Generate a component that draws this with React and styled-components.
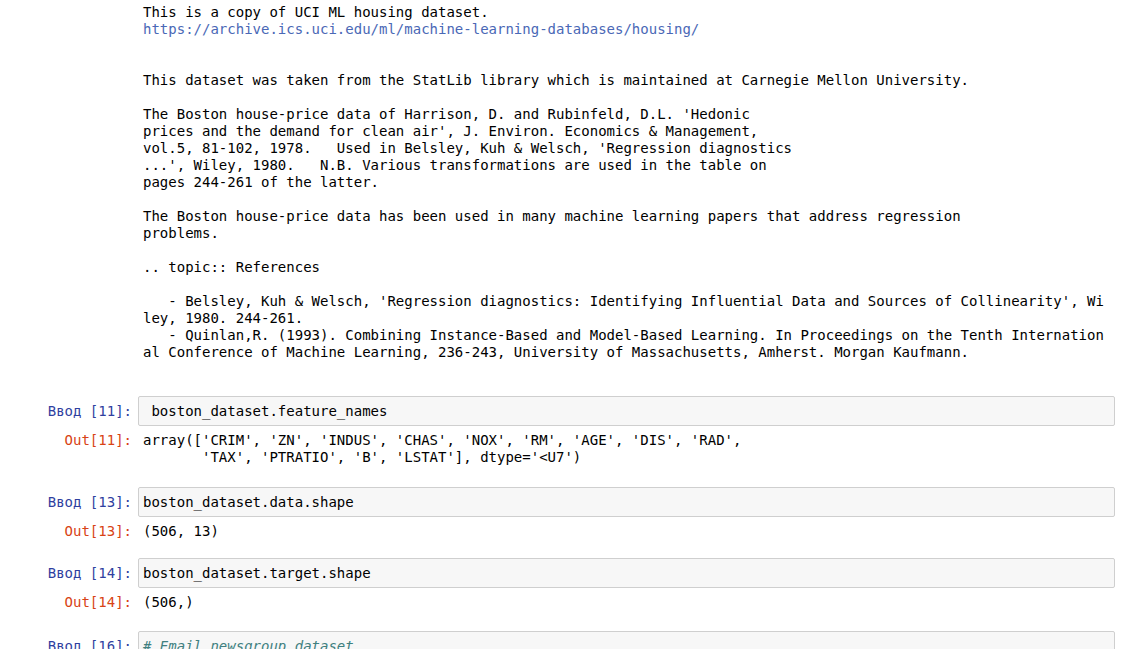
import React from 'react'
import styled, { createGlobalStyle } from 'styled-components';

const GlobalStyle = createGlobalStyle`
    body {
        margin: 0;
        background: #ffffff;
        color: #000000;
        font-family: 'DejaVu Sans Mono', 'Liberation Mono', monospace;
        font-size: 14px;
    }
`

const Notebook = styled.div`
    width: 1115px;
    padding-top: 4px;
    display: flex;
    flex-direction: column;
`

const Cell = styled.div`
    display: flex;
    flex-direction: column;
    padding: 6px 0;
`

const Row = styled.div`
    display: grid;
    grid-template-columns: 138px 1fr;
`

const Prompt = styled.div`
    text-align: right;
    padding: ${props => props.$top}px 6px 0 0;
    color: ${props => props.$out ? '#D84315' : '#303F9F'};
    line-height: 17px;
    white-space: pre;
`

const InputArea = styled.div`
    background: #f7f7f7;
    border: 1px solid #cfcfcf;
    border-radius: 2px;
    padding: 5.5px 4px;
    line-height: 17px;
    white-space: pre;
`

const Comment = styled.span`
    color: #408080;
    font-style: italic;
`

const Output = styled.pre`
    margin: 0;
    padding: ${props => props.$top ?? 6}px 5px ${props => props.$bottom ?? 7}px;
    font-family: inherit;
    font-size: 14px;
    line-height: 17px;
    white-space: pre;
`

const Link = styled.span`
    color: #4a68b6;
`

const descr = `


This dataset was taken from the StatLib library which is maintained at Carnegie Mellon University.

The Boston house-price data of Harrison, D. and Rubinfeld, D.L. 'Hedonic
prices and the demand for clean air', J. Environ. Economics & Management,
vol.5, 81-102, 1978.   Used in Belsley, Kuh & Welsch, 'Regression diagnostics
...', Wiley, 1980.   N.B. Various transformations are used in the table on
pages 244-261 of the latter.

The Boston house-price data has been used in many machine learning papers that address regression
problems.

.. topic:: References

   - Belsley, Kuh & Welsch, 'Regression diagnostics: Identifying Influential Data and Sources of Collinearity', Wi
ley, 1980. 244-261.
   - Quinlan,R. (1993). Combining Instance-Based and Model-Based Learning. In Proceedings on the Tenth Internation
al Conference of Machine Learning, 236-243, University of Massachusetts, Amherst. Morgan Kaufmann.

`

const cells = [
    { n: 11, code: ' boston_dataset.feature_names', out: "array(['CRIM', 'ZN', 'INDUS', 'CHAS', 'NOX', 'RM', 'AGE', 'DIS', 'RAD',\n       'TAX', 'PTRATIO', 'B', 'LSTAT'], dtype='<U7')", bottom: 9 },
    { n: 13, code: 'boston_dataset.data.shape', out: '(506, 13)', bottom: 6 },
    { n: 14, code: 'boston_dataset.target.shape', out: '(506,)', bottom: 8 },
]

function CodeCell({ n, code, out, comment, bottom }) {
    return (
        <Cell>
            <Row>
                <Prompt $top={6.5}>Ввод [{n}]:</Prompt>
                <InputArea>{comment ? <Comment>{code}</Comment> : code}</InputArea>
            </Row>
            {out && (
                <Row>
                    <Prompt $out $top={6}>Out[{n}]:</Prompt>
                    <Output $bottom={bottom}>{out}</Output>
                </Row>
            )}
        </Cell>
    )
}

export default function App() {
    return (
        <>
            <GlobalStyle />
            <Notebook>
                <Row>
                    <div />
                    <Output $top={0} $bottom={12}>
                        This is a copy of UCI ML housing dataset.{'\n'}
                        <Link>https://archive.ics.uci.edu/ml/machine-learning-databases/housing/</Link>
                        {descr}
                    </Output>
                </Row>
                {cells.map(c => <CodeCell key={c.n} {...c} />)}
                <CodeCell n={16} code="# Email newsgroup dataset" comment />
            </Notebook>
        </>
    )
}
